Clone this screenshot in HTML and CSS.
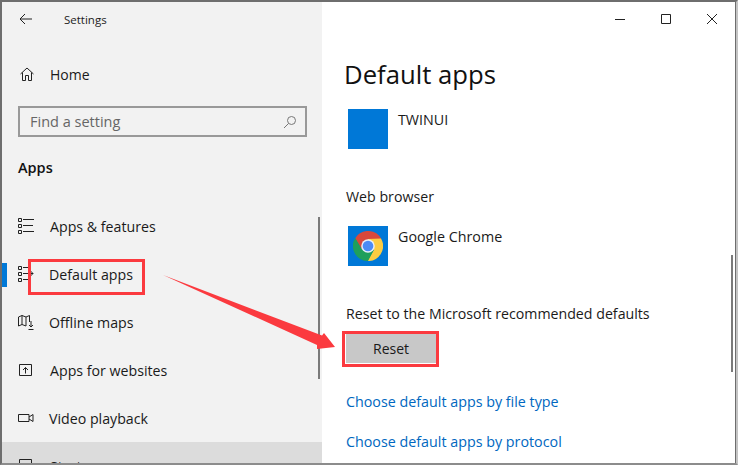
FILE: index.html
```html
<!DOCTYPE html>
<html lang="en">
<head>
<meta charset="utf-8">
<title>Settings</title>
<link rel="stylesheet" href="styles.css">
</head>
<body>
<div class="window">
  <aside class="sidebar">
    <div class="titlebar">
      <svg class="back" width="14" height="12" viewBox="0 0 14 12"><path d="M13 6H1M6 1 1 6l5 5" fill="none" stroke="#222" stroke-width="1"/></svg>
      <span class="title">Settings</span>
    </div>
    <div class="home">
      <svg class="ico" width="16" height="16" viewBox="0 0 16 16"><path d="M1.500 8 8 2 14.500 8M3.500 6.500V14.500H6.500V9.500H9.500V14.500H12.500V6.500" fill="none" stroke="#222" stroke-width="1"/></svg>
      <span>Home</span>
    </div>
    <div class="search">
      <span class="search-text">Find a setting</span>
      <svg width="14" height="14" viewBox="0 0 14 14"><circle cx="8.500" cy="5.500" r="4" fill="none" stroke="#777"/><path d="M5.500 8.500 1 13" stroke="#777" fill="none"/></svg>
    </div>
    <h2 class="group">Apps</h2>
    <nav class="nav">
      <div class="item">
        <svg class="ico" width="16" height="16" viewBox="0 0 16 16"><path d="M.500 .500h3v3h-3zM.500 6.500h3v3h-3zM.500 12.500h3v3h-3z" fill="none" stroke="#222"/><path d="M5 1.500h11M5 7.500h10M5 13.500h11" stroke="#222" fill="none"/></svg>
        <span>Apps &amp; features</span>
      </div>
      <div class="item tight active">
        <svg class="ico" width="16" height="16" viewBox="0 0 16 16"><path d="M.500 .500h3v3h-3zM.500 6.500h3v3h-3zM.500 12.500h3v3h-3z" fill="none" stroke="#222"/><path d="M5 1.500h8M5 7.500h10M12.500 5 15 7.500 12.500 10M5 13.500h8" stroke="#222" fill="none"/></svg>
        <span>Default apps</span>
      </div>
      <div class="item tight">
        <svg class="ico" width="16" height="16" viewBox="0 0 16 16"><path d="M.500 3 4 1.500 8 3 11.500 1.500V8M.500 3V12L4 10.500 8 12M4 1.500V10.500M8 3V12M13 7V13M11 11l2 2 2-2M10.500 15.500h5" fill="none" stroke="#222"/></svg>
        <span>Offline maps</span>
      </div>
      <div class="item">
        <svg class="ico" width="16" height="14" viewBox="0 0 16 14"><path d="M4 1.500H1.500V12.500H13.500V1.500H11M4 1.500h7M7.500 10.500V4.500M5 7l2.500-2.500L10 7" fill="none" stroke="#222"/></svg>
        <span>Apps for websites</span>
      </div>
      <div class="item tight">
        <svg class="ico" width="16" height="12" viewBox="0 0 16 12"><path d="M.500 2.500H11V9.500H.500zM11 5l4-2.500V9.500L11 7" fill="none" stroke="#222"/></svg>
        <span>Video playback</span>
      </div>
      <div class="item shaded">
        <svg class="ico" width="16" height="14" viewBox="0 0 16 14"><path d="M1.500 .500h12v13h-12z" fill="none" stroke="#222"/></svg>
        <span>Startup</span>
      </div>
    </nav>
    <div class="side-scroll"></div>
  </aside>
  <main class="content">
    <div class="controls">
      <svg width="12" height="12" viewBox="0 0 12 12"><path d="M1 6.500h10" stroke="#222" fill="none"/></svg>
      <svg width="12" height="12" viewBox="0 0 12 12"><path d="M1.500 1.500h9v9h-9z" stroke="#222" fill="none"/></svg>
      <svg width="12" height="12" viewBox="0 0 12 12"><path d="m1 1 10 10M11 1 1 11" stroke="#222" fill="none"/></svg>
    </div>
    <h1>Default apps</h1>
    <div class="app first">
      <div class="tile"></div>
      <span class="app-name">TWINUI</span>
    </div>
    <div class="label web">Web browser</div>
    <div class="app">
      <div class="tile">
        <svg width="30" height="30" viewBox="0 0 30 30">
          <path d="M15 15V8H28.300A15 15 0 0 0 2 7.500L8.900 18.500Z" fill="#d9483b"/>
          <path d="M15 15V8H28.300A15 15 0 0 0 2 7.500L8.900 18.500Z" fill="#fccc42" transform="rotate(120 15 15)"/>
          <path d="M15 15V8H28.300A15 15 0 0 0 2 7.500L8.900 18.500Z" fill="#1f9f5b" transform="rotate(240 15 15)"/>
          <circle cx="15" cy="15" r="6.800" fill="#e8eef8"/>
          <circle cx="15" cy="15" r="5.300" fill="#4c8bf5"/>
        </svg>
      </div>
      <span class="app-name">Google Chrome</span>
    </div>
    <div class="label reset-label">Reset to the Microsoft recommended defaults</div>
    <button class="reset" type="button">Reset</button>
    <a class="link first-link" href="#">Choose default apps by file type</a>
    <a class="link" href="#">Choose default apps by protocol</a>
    <div class="main-scroll"></div>
  </main>
  <div class="mark mark-default"></div>
  <div class="mark mark-reset"></div>
  <svg class="arrow" width="175" height="80" viewBox="163 275 175 80"><path d="M163 275 322 335.600 324 333 335 347 317 349 317 345Z" fill="#fb3a3f"/></svg>
</div>
</body>
</html>
```
FILE: styles.css
```css
* { box-sizing: border-box; }
html, body { margin: 0; padding: 0; background: #fff; }
body { width: 738px; height: 465px; overflow: hidden; font-family: "Open Sans", "Noto Sans", sans-serif; color: #1a1a1a; }
.window { position: relative; width: 738px; height: 465px; border-style: solid; border-color: #6e6e6e #c4c4c4 #8c8c8c #6e6e6e; border-width: 2px 2px 2px 2px; display: flex; overflow: hidden; background: #fff; }
.sidebar { position: relative; width: 320px; flex: none; background: #f2f2f2; height: 100%; overflow: hidden; }
.titlebar { display: flex; align-items: center; height: 34px; padding-left: 17px; }
.title { font-size: 11.500px; margin-left: 31px; color: #222; }
.home { display: flex; align-items: center; gap: 15px; height: 36px; margin-top: 20px; padding-left: 17px; font-size: 14px; }
.search { display: flex; align-items: center; justify-content: space-between; margin: 14px 15px 0 16px; height: 31px; border: 2px solid #999; padding: 0 8px 0 10px; }
.search-text { font-size: 14.500px; color: #666; }
.group { margin: 21px 0 0 16px; font-size: 14.500px; font-weight: 600; line-height: 20px; color: #111; }
.nav { margin-top: 24px; }
.item { position: relative; display: flex; align-items: center; height: 48px; padding-left: 16px; font-size: 14.200px; gap: 16px; }
.item.tight { gap: 15px; }
.item.active::before { content: ""; position: absolute; left: 0; top: 13px; width: 5px; height: 24px; background: #0078d7; }
.item.shaded { background: #dcdcdc; }
.ico { flex: none; }
.side-scroll { position: absolute; right: 2px; top: 215px; width: 2px; height: 162px; background: #7a7a7a; }
.content { position: relative; flex: 1; padding-left: 24px; min-width: 0; border-right: 1px solid #6e6e6e; }
.controls { display: flex; justify-content: flex-end; gap: 34px; padding: 11px 17px 0 0; height: 34px; }
h1 { margin: 19px 0 0 -2px; font-size: 25.700px; font-weight: 400; line-height: 40px; color: #111; }
.app { display: flex; gap: 10px; font-size: 14.300px; padding-left: 2px; line-height: 20px; }
.app-name { padding-top: 1px; }
.app.first { margin-top: 14px; }
.tile { width: 40px; height: 40px; background: #0078d7; display: flex; align-items: center; justify-content: center; flex: none; }
.label { font-size: 14.200px; line-height: 20px; }
.web { margin: 38px 0 19px; }
.reset-label { margin-top: 38px; }
.reset { display: block; width: 90px; height: 29px; margin: 10px 0 0 0; border: 0; background: #c8c8c8; font: inherit; font-size: 14px; color: #1a1a1a; padding: 0; }
.link { display: block; color: #0067c0; font-size: 14.300px; line-height: 20px; text-decoration: none; margin-top: 20px; }
.first-link { margin-top: 29px; }
.main-scroll { position: absolute; right: 2px; top: 253px; width: 2px; height: 117px; background: #7a7a7a; }
.mark { position: absolute; border: 3px solid #fb3a3f; }
.mark-default { left: 26px; top: 257px; width: 117px; height: 36px; }
.mark-reset { left: 340px; top: 329px; width: 97px; height: 36px; }
.arrow { position: absolute; left: 161px; top: 273px; }
```
